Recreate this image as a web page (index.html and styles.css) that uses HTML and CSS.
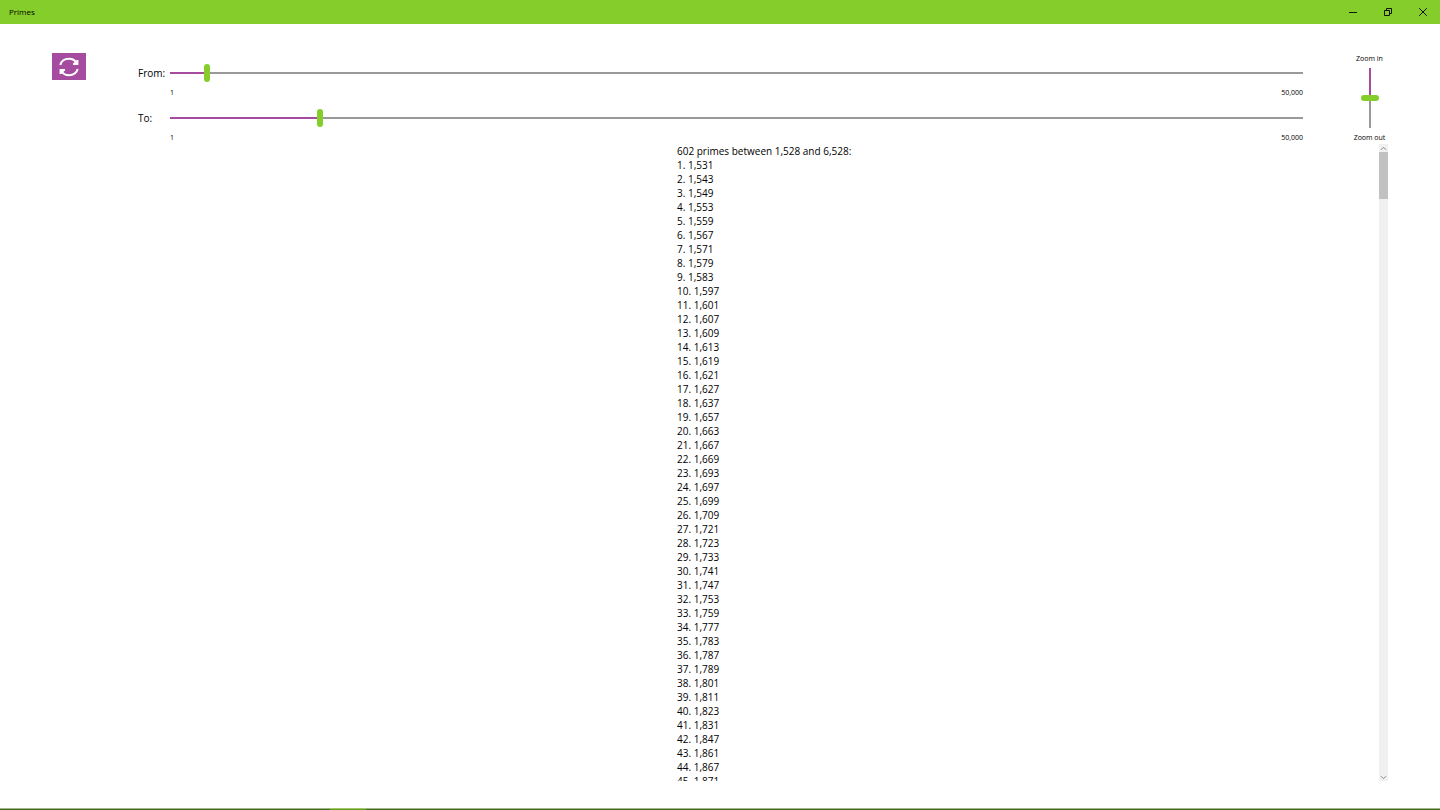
FILE: index.html
```html
<!DOCTYPE html>
<html lang="en">
<head>
<meta charset="utf-8">
<title>Primes</title>
<link rel="stylesheet" href="styles.css">
</head>
<body>
<header class="titlebar">
  <h1 class="title">Primes</h1>
  <div class="window-buttons">
    <button class="window-button" type="button" aria-label="Minimize"><svg viewBox="0 0 10 10"><path d="M1 5.5h8"/></svg></button>
    <button class="window-button" type="button" aria-label="Restore"><svg viewBox="0 0 10 10"><path d="M1.500 3.500h5v5h-5zM3.500 3.500v-2h5v5h-2"/></svg></button>
    <button class="window-button" type="button" aria-label="Close"><svg viewBox="0 0 10 10"><path d="M1.200 1.200l7.600 7.600M8.800 1.200l-7.600 7.600"/></svg></button>
  </div>
</header>
<main class="main">
  <button class="refresh" type="button" aria-label="Refresh">
    <svg viewBox="0 0 20 20"><path class="arc" d="M1.300 8C2.300 4.300 5.800 1.800 10 1.800c3.300 0 6 1.500 7.500 4M18.700 12C17.700 15.700 14.200 18.200 10 18.200c-3.300 0-6-1.500-7.500-4"/><path class="tip" d="M17.800 3h1.600v5h-5.400V6.400zM2.200 17H.600v-5H6v1.600z"/></svg>
  </button>
  <div class="content">
    <div class="controls">
      <div class="ranges">
        <div class="range-row">
          <label class="range-label" for="from">From:</label>
          <input class="slider" id="from" type="range" min="1" max="50000" value="1528" style="--fill:3.3%">
          <div class="limits"><span>1</span><span>50,000</span></div>
        </div>
        <div class="range-row">
          <label class="range-label" for="to">To:</label>
          <input class="slider" id="to" type="range" min="1" max="50000" value="6528" style="--fill:13.2%">
          <div class="limits"><span>1</span><span>50,000</span></div>
        </div>
      </div>
      <div class="zoom">
        <label for="zoom">Zoom in</label>
        <input class="zoom-slider" id="zoom" type="range" min="0" max="100" value="50">
        <span>Zoom out</span>
      </div>
    </div>
    <section class="results">
      <div class="listing">
        <p class="summary">602 primes between 1,528 and 6,528:</p>
        <ol class="primes">
          <li>1. 1,531</li>
          <li>2. 1,543</li>
          <li>3. 1,549</li>
          <li>4. 1,553</li>
          <li>5. 1,559</li>
          <li>6. 1,567</li>
          <li>7. 1,571</li>
          <li>8. 1,579</li>
          <li>9. 1,583</li>
          <li>10. 1,597</li>
          <li>11. 1,601</li>
          <li>12. 1,607</li>
          <li>13. 1,609</li>
          <li>14. 1,613</li>
          <li>15. 1,619</li>
          <li>16. 1,621</li>
          <li>17. 1,627</li>
          <li>18. 1,637</li>
          <li>19. 1,657</li>
          <li>20. 1,663</li>
          <li>21. 1,667</li>
          <li>22. 1,669</li>
          <li>23. 1,693</li>
          <li>24. 1,697</li>
          <li>25. 1,699</li>
          <li>26. 1,709</li>
          <li>27. 1,721</li>
          <li>28. 1,723</li>
          <li>29. 1,733</li>
          <li>30. 1,741</li>
          <li>31. 1,747</li>
          <li>32. 1,753</li>
          <li>33. 1,759</li>
          <li>34. 1,777</li>
          <li>35. 1,783</li>
          <li>36. 1,787</li>
          <li>37. 1,789</li>
          <li>38. 1,801</li>
          <li>39. 1,811</li>
          <li>40. 1,823</li>
          <li>41. 1,831</li>
          <li>42. 1,847</li>
          <li>43. 1,861</li>
          <li>44. 1,867</li>
          <li>45. 1,871</li>
        </ol>
      </div>
      <div class="scrollbar">
        <button class="scroll-button" type="button" aria-label="Scroll up"><svg viewBox="0 0 7 5"><path d="M1 3.800l2.500-2.500L6 3.800"/></svg></button>
        <div class="scroll-track"><div class="scroll-thumb"></div></div>
        <button class="scroll-button" type="button" aria-label="Scroll down"><svg viewBox="0 0 7 5"><path d="M1 1.200l2.500 2.500L6 1.200"/></svg></button>
      </div>
    </section>
  </div>
</main>
<footer class="taskbar"><div class="task-active"></div></footer>
</body>
</html>
```
FILE: styles.css
```css
* { box-sizing: border-box; }

body {
  margin: 0;
  height: 100vh;
  display: flex;
  flex-direction: column;
  overflow: hidden;
  background: #fff;
  color: #000;
  font: 10px/14px "Open Sans", "Noto Sans", sans-serif;
}

button {
  padding: 0;
  border: 0;
  background: none;
  display: flex;
  align-items: center;
  justify-content: center;
}

svg { fill: none; stroke: currentColor; }

.titlebar {
  flex: none;
  height: 24px;
  padding-left: 9px;
  display: flex;
  align-items: center;
  justify-content: space-between;
  background: #85cd2a;
}

.title { margin: 0; font-size: 8px; font-weight: 400; }

.window-buttons { display: flex; height: 100%; }
.window-button { width: 35px; color: #111; }
.window-button svg { width: 10px; height: 10px; }

.main {
  flex: 1;
  min-height: 0;
  padding: 29px 52px 27px;
  display: grid;
  grid-template-columns: 86px 1fr;
  grid-template-rows: minmax(0, 1fr);
}

.refresh {
  width: 34px;
  height: 27px;
  background: #a64ca0;
  color: #fff;
}
.refresh svg { width: 20px; height: 20px; }
.refresh .arc { stroke-width: 2; }
.refresh .tip { fill: currentColor; stroke: none; }

.content { display: flex; flex-direction: column; min-height: 0; }

.controls { flex: none; display: flex; justify-content: space-between; gap: 48px; }

.ranges {
  flex: 1;
  padding-top: 7px;
  display: flex;
  flex-direction: column;
  gap: 6px;
}

.range-row {
  display: grid;
  grid-template-columns: 32px 1fr;
  grid-template-rows: 26px 12px;
  row-gap: 1px;
  align-items: center;
}

.limits {
  grid-column: 2;
  display: flex;
  justify-content: space-between;
  font-size: 7px;
  line-height: 12px;
}

.slider,
.zoom-slider {
  appearance: none;
  margin: 0;
  background-color: transparent;
  background-position: center;
  background-repeat: no-repeat;
}

.slider {
  width: 100%;
  height: 26px;
  background-image: linear-gradient(to right, #a64ca0 var(--fill), #999 var(--fill));
  background-size: 100% 2px;
}

.slider::-webkit-slider-thumb {
  appearance: none;
  width: 6px;
  height: 18px;
  border-radius: 3px;
  background: #85cd2a;
}

.zoom {
  width: 37px;
  display: flex;
  flex-direction: column;
  align-items: center;
  font-size: 7px;
  line-height: 12px;
  white-space: nowrap;
}

.zoom-slider {
  writing-mode: vertical-lr;
  direction: rtl;
  width: 18px;
  height: 60px;
  margin: 3px 0 4px;
  background-image: linear-gradient(#a64ca0 50%, #999 50%);
  background-size: 2px 100%;
}

.zoom-slider::-webkit-slider-thumb {
  appearance: none;
  width: 18px;
  height: 6px;
  border-radius: 3px;
  background: #85cd2a;
}

.results { flex: 1; min-height: 0; display: flex; overflow: hidden; }

.listing {
  flex: 1;
  padding-left: 9px;
  display: flex;
  flex-direction: column;
  align-items: center;
}

.summary, .primes { width: 172px; margin: 0; padding: 0; list-style: none; white-space: nowrap; }

.scrollbar {
  width: 9px;
  display: flex;
  flex-direction: column;
  background: #f0f0f0;
}
.scroll-button { height: 8px; color: #888; }
.scroll-button svg { width: 7px; height: 5px; }
.scroll-track { flex: 1; }
.scroll-thumb { height: 47px; background: #c1c1c1; }

.taskbar {
  flex: none;
  height: 2px;
  padding-left: 330px;
  background: linear-gradient(#a3b78d 50%, #466b1d 50%);
}
.task-active { width: 36px; height: 2px; background: linear-gradient(#a3c86b 50%, #669d1e 50%); }
```
